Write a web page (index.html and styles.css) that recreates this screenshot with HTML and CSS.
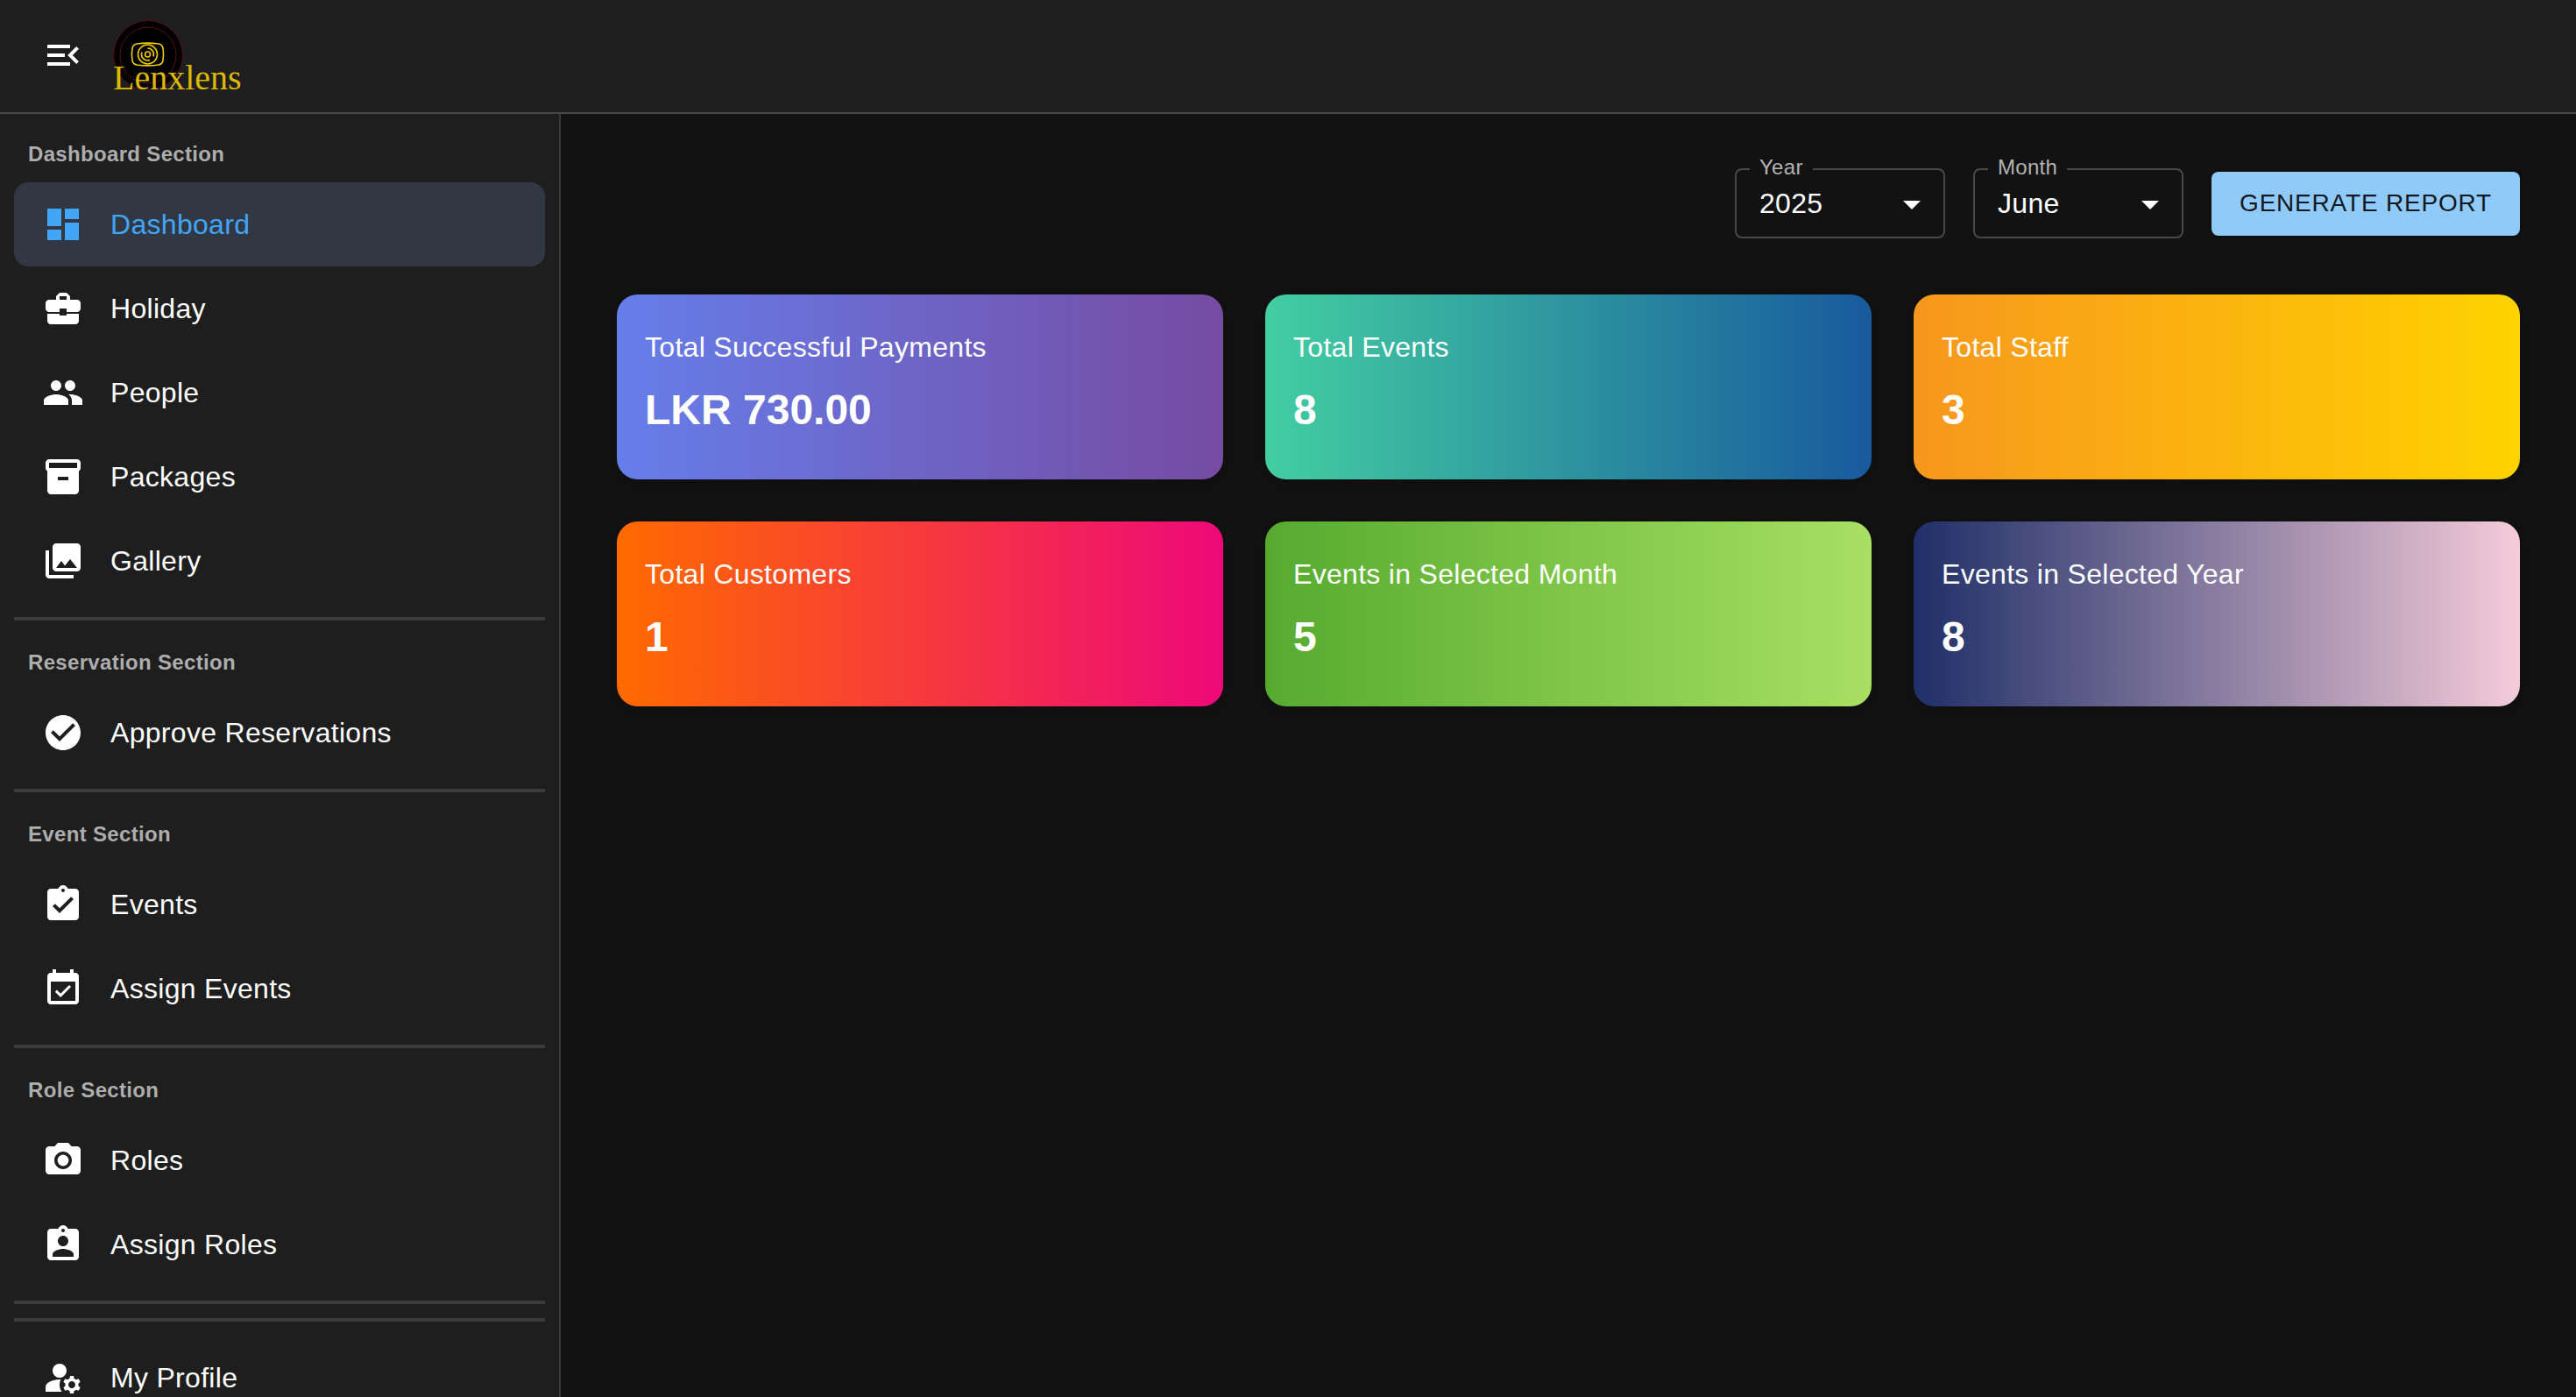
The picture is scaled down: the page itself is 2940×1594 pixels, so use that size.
FILE: index.html
```html
<!DOCTYPE html>
<html lang="en">
<head>
    <meta charset="UTF-8">
    <meta name="viewport" content="width=device-width, initial-scale=1.0">
    <title>Lenxlens Dashboard</title>
    <link rel="stylesheet" href="styles.css">
</head>
<body>

<header class="topbar">
    <button class="menu-btn" type="button" aria-label="Close menu">
        <svg class="icon" viewBox="0 0 24 24"><path d="M3 18h13v-2H3zm0-5h10v-2H3zm0-7v2h13V6zm18 9.59L17.42 12 21 8.41 19.59 7l-5 5 5 5z"/></svg>
    </button>
    <div class="logo">
        <svg class="logo-mark" viewBox="0 0 80 80">
            <circle cx="40" cy="40" r="39.5" fill="#000" stroke="#5c0a2c" stroke-width="1"/>
            <circle cx="40" cy="40" r="32" fill="none" stroke="#5c0a2c" stroke-width="1"/>
            <g fill="none" stroke="#f0cb00" stroke-width="1.600">
                <path d="M27 27c7-1 18-1 25 0 3 .5 4.500 2.500 5 5 .8 4.500.8 9 0 14-.5 2.500-2 4.500-5 5-7 1-18 1-25 0-3-.5-4.500-2.500-5-5-.8-5-.8-9.500 0-14 .5-2.500 2-4.500 5-5z"/>
                <circle cx="39.500" cy="39" r="11"/>
                <path d="M39.500 32a7 7 0 0 1 6.500 9.500M33 36.500a7 7 0 0 0 9 9"/>
                <circle cx="39.500" cy="39" r="3"/>
            </g>
        </svg>
        <span class="logo-text">Lenxlens</span>
    </div>
</header>

<div class="layout">
    <nav class="sidebar">
        <div class="section first">
            <div class="section-title">Dashboard Section</div>
            <a class="item active"><svg class="icon" viewBox="0 0 24 24"><path d="M3 13h8V3H3zm0 8h8v-6H3zm10 0h8V11h-8zm0-18v6h8V3z"/></svg><span>Dashboard</span></a>
            <a class="item"><svg class="icon" viewBox="0 0 24 24"><path d="M10 16v-1H3.010L3 19c0 1.110.890 2 2 2h14c1.110 0 2-.890 2-2v-4h-7v1zm10-9h-4.010V5l-2-2h-4l-2 2v2H4c-1.100 0-2 .9-2 2v3c0 1.110.890 2 2 2h6v-2h4v2h6c1.100 0 2-.9 2-2V9c0-1.100-.9-2-2-2m-6 0h-4V5h4z"/></svg><span>Holiday</span></a>
            <a class="item"><svg class="icon" viewBox="0 0 24 24"><path d="M16 11c1.660 0 2.990-1.340 2.990-3S17.660 5 16 5s-3 1.340-3 3 1.340 3 3 3m-8 0c1.660 0 2.990-1.340 2.990-3S9.660 5 8 5 5 6.340 5 8s1.340 3 3 3m0 2c-2.330 0-7 1.170-7 3.500V19h14v-2.500c0-2.330-4.670-3.500-7-3.500m8 0c-.29 0-.62.02-.97.05 1.160.84 1.970 1.970 1.970 3.450V19h6v-2.500c0-2.330-4.670-3.500-7-3.500"/></svg><span>People</span></a>
            <a class="item"><svg class="icon" viewBox="0 0 24 24"><path d="M20 2H4c-1 0-2 .9-2 2v3.010c0 .72.43 1.340 1 1.690V20c0 1.100 1.100 2 2 2h14c.9 0 2-.9 2-2V8.700c.57-.35 1-.97 1-1.690V4c0-1.100-1-2-2-2m-5 12H9v-2h6zm5-7H4V4l16-.02z"/></svg><span>Packages</span></a>
            <a class="item"><svg class="icon" viewBox="0 0 24 24"><path d="M22 16V4c0-1.100-.9-2-2-2H8c-1.100 0-2 .9-2 2v12c0 1.100.9 2 2 2h12c1.100 0 2-.9 2-2m-11-4 2.030 2.710L16 11l4 5H8zM2 6v14c0 1.100.9 2 2 2h14v-2H4V6z"/></svg><span>Gallery</span></a>
        </div>
        <hr class="divider">
        <div class="section">
            <div class="section-title">Reservation Section</div>
            <a class="item"><svg class="icon" viewBox="0 0 24 24"><path d="M12 2C6.480 2 2 6.480 2 12s4.480 10 10 10 10-4.480 10-10S17.520 2 12 2m-2 15-5-5 1.410-1.410L10 14.170l7.590-7.590L19 8z"/></svg><span>Approve Reservations</span></a>
        </div>
        <hr class="divider">
        <div class="section">
            <div class="section-title">Event Section</div>
            <a class="item"><svg class="icon" viewBox="0 0 24 24"><path d="M19 3h-4.180C14.400 1.840 13.300 1 12 1c-1.300 0-2.400.84-2.820 2H5c-1.100 0-2 .9-2 2v14c0 1.100.9 2 2 2h14c1.100 0 2-.9 2-2V5c0-1.100-.9-2-2-2m-7 0c.55 0 1 .45 1 1s-.45 1-1 1-1-.45-1-1 .45-1 1-1m-2 14-4-4 1.410-1.410L10 14.170l6.590-6.590L18 9z"/></svg><span>Events</span></a>
            <a class="item"><svg class="icon" viewBox="0 0 24 24"><path d="M16.530 11.060 15.470 10l-4.880 4.880-2.120-2.120-1.060 1.060L10.590 17zM19 3h-1V1h-2v2H8V1H6v2H5c-1.110 0-1.990.9-1.990 2L3 19c0 1.100.89 2 2 2h14c1.100 0 2-.9 2-2V5c0-1.100-.9-2-2-2m0 16H5V8h14z"/></svg><span>Assign Events</span></a>
        </div>
        <hr class="divider">
        <div class="section">
            <div class="section-title">Role Section</div>
            <a class="item"><svg class="icon" viewBox="0 0 24 24"><circle cx="12" cy="12" r="3.200"/><path d="M9 2 7.170 4H4c-1.100 0-2 .9-2 2v12c0 1.100.9 2 2 2h16c1.100 0 2-.9 2-2V6c0-1.100-.9-2-2-2h-3.170L15 2zm3 15c-2.760 0-5-2.240-5-5s2.240-5 5-5 5 2.240 5 5-2.240 5-5 5"/></svg><span>Roles</span></a>
            <a class="item"><svg class="icon" viewBox="0 0 24 24"><path d="M19 3h-4.180C14.400 1.840 13.300 1 12 1c-1.300 0-2.400.84-2.820 2H5c-1.100 0-2 .9-2 2v14c0 1.100.9 2 2 2h14c1.100 0 2-.9 2-2V5c0-1.100-.9-2-2-2m-7 0c.55 0 1 .45 1 1s-.45 1-1 1-1-.45-1-1 .45-1 1-1m0 4c1.660 0 3 1.340 3 3s-1.340 3-3 3-3-1.340-3-3 1.340-3 3-3m6 12H6v-1.400c0-2 4-3.100 6-3.100s6 1.100 6 3.100z"/></svg><span>Assign Roles</span></a>
        </div>
        <hr class="divider">
        <hr class="divider tight">
        <div class="section tail">
            <a class="item"><svg class="icon" viewBox="0 0 24 24"><circle cx="10" cy="8" r="4"/><path d="M10.670 13.020c-.22-.01-.44-.02-.67-.02-2.420 0-4.680.67-6.610 1.820-.88.52-1.390 1.500-1.390 2.530V20h9.260c-.79-1.130-1.260-2.510-1.260-4 0-1.070.25-2.070.67-2.980"/><path d="M20.750 16c0-.22-.03-.42-.06-.63l1.140-1.010-1-1.730-1.450.49c-.32-.27-.68-.48-1.080-.63L18 11h-2l-.3 1.490c-.4.15-.76.36-1.080.63l-1.450-.49-1 1.730 1.140 1.010c-.03.21-.06.41-.06.63s.03.42.06.63l-1.140 1.010 1 1.730 1.450-.49c.32.27.68.48 1.080.63L16 21h2l.3-1.490c.4-.15.76-.36 1.080-.63l1.450.49 1-1.730-1.140-1.010c.03-.21.06-.41.06-.63M17 18c-1.100 0-2-.9-2-2s.9-2 2-2 2 .9 2 2-.9 2-2 2"/></svg><span>My Profile</span></a>
        </div>
    </nav>

    <main class="content">
        <div class="filters">
            <div class="select">
                <span class="select-label">Year</span>
                <span class="select-value">2025</span>
                <span class="select-arrow"></span>
            </div>
            <div class="select">
                <span class="select-label">Month</span>
                <span class="select-value">June</span>
                <span class="select-arrow"></span>
            </div>
            <button class="report-btn" type="button">Generate Report</button>
        </div>

        <section class="cards">
            <div class="card card-payments"><div class="card-title">Total Successful Payments</div><div class="card-value">LKR 730.00</div></div>
            <div class="card card-events"><div class="card-title">Total Events</div><div class="card-value">8</div></div>
            <div class="card card-staff"><div class="card-title">Total Staff</div><div class="card-value">3</div></div>
            <div class="card card-customers"><div class="card-title">Total Customers</div><div class="card-value">1</div></div>
            <div class="card card-month"><div class="card-title">Events in Selected Month</div><div class="card-value">5</div></div>
            <div class="card card-year"><div class="card-title">Events in Selected Year</div><div class="card-value">8</div></div>
        </section>
    </main>
</div>

</body>
</html>
```

FILE: styles.css
```css
* { box-sizing: border-box; }
html, body { height: 100%; }
body {
    margin: 0; height: 1594px; overflow: hidden;
    background: #121212; color: #fff;
    font-family: "Liberation Sans", Arial, Helvetica, sans-serif;
    font-size: 32px; line-height: 48px;
}
.icon { width: 48px; height: 48px; fill: currentColor; flex: none; display: block; }

/* top bar */
.topbar {
    height: 130px; display: flex; align-items: center; padding-left: 32px;
    background: #1e1e1e; border-bottom: 2px solid #484848;
}
.menu-btn { width: 80px; height: 80px; padding: 16px; margin-top: -2px; border: none; background: none; color: #fff; }
.logo { position: relative; width: 160px; height: 80px; margin-left: 17px; margin-top: -2px; }
.logo-mark { width: 80px; height: 80px; display: block; }
.logo-text {
    position: absolute; left: 0; top: 43px;
    font-family: "Liberation Serif", "Times New Roman", serif;
    font-size: 40px; line-height: 46px; color: #dcb900; white-space: nowrap;
}

/* page */
.layout { display: flex; height: 1464px; }
.sidebar { width: 640px; flex: none; overflow: hidden; background: #1e1e1e; border-right: 2px solid #3a3a3a; padding: 0 16px; }
.section { padding-top: 30px; padding-bottom: 16px; }
.section + .divider + .section { padding-top: 32px; }
.section.first { padding-top: 30px; }
.section.tail { padding-top: 16px !important; }
.section-title {
    padding-left: 16px; margin-bottom: 16px;
    font-size: 24px; line-height: 32px; font-weight: 700; color: #adadad;
    letter-spacing: .33px;
}
.divider { height: 4px; margin: 0; border: none; background: #3b3b3b; }
.divider.tight { margin-top: 16px; }
.item {
    height: 96px; display: flex; align-items: center; gap: 30px; padding-left: 32px;
    border-radius: 16px; color: #fff; white-space: nowrap; letter-spacing: .3px;
}
.item.active { background: #313843; color: #42a5f5; }

/* main */
.content { flex: 1; padding: 62px 64px 0; }
.filters { display: flex; justify-content: flex-end; align-items: center; gap: 32px; height: 80px; }
.select {
    position: relative; width: 240px; height: 80px; padding-left: 26px;
    display: flex; align-items: center;
    border: 2px solid #484848; border-radius: 8px; letter-spacing: .3px;
}
.select-label {
    position: absolute; left: 15px; top: -19px; padding: 0 11px;
    font-size: 24px; line-height: 32px; color: #b3b3b3; background: #121212;
}
.select-arrow {
    position: absolute; right: 26px; top: 35px;
    border-left: 10px solid transparent; border-right: 10px solid transparent; border-top: 10px solid #fff;
}
.report-btn {
    width: 352px; height: 73px; border: none; border-radius: 8px;
    background: #90caf9; color: #121820;
    font: 400 28px/1 "Liberation Sans", Arial, sans-serif;
    letter-spacing: .8px; text-transform: uppercase;
    box-shadow: 0 3px 1px -2px rgba(0,0,0,.2), 0 2px 2px 0 rgba(0,0,0,.14), 0 1px 5px 0 rgba(0,0,0,.12);
}

.cards { display: grid; grid-template-columns: repeat(3, 1fr); gap: 48px; margin-top: 64px; }
.card { height: 211px; padding: 36px 32px 0; border-radius: 24px; color: #fff; box-shadow: 0 4px 20px rgba(0,0,0,.25); }
.card-title { line-height: 48px; letter-spacing: .3px; }
.card-value { margin-top: 18px; font-size: 48px; line-height: 60px; font-weight: 700; }
.card-payments { background: linear-gradient(90deg, #667eea, #764ba2); }
.card-events { background: linear-gradient(90deg, #43cea2, #185a9d); }
.card-staff { background: linear-gradient(90deg, #f7971e, #ffd200); }
.card-customers { background: linear-gradient(90deg, #ff6a00, #ee0979); }
.card-month { background: linear-gradient(90deg, #56ab2f, #a8e063); }
.card-year { background: linear-gradient(90deg, #1f2f68, #f5cbd9); }
```
